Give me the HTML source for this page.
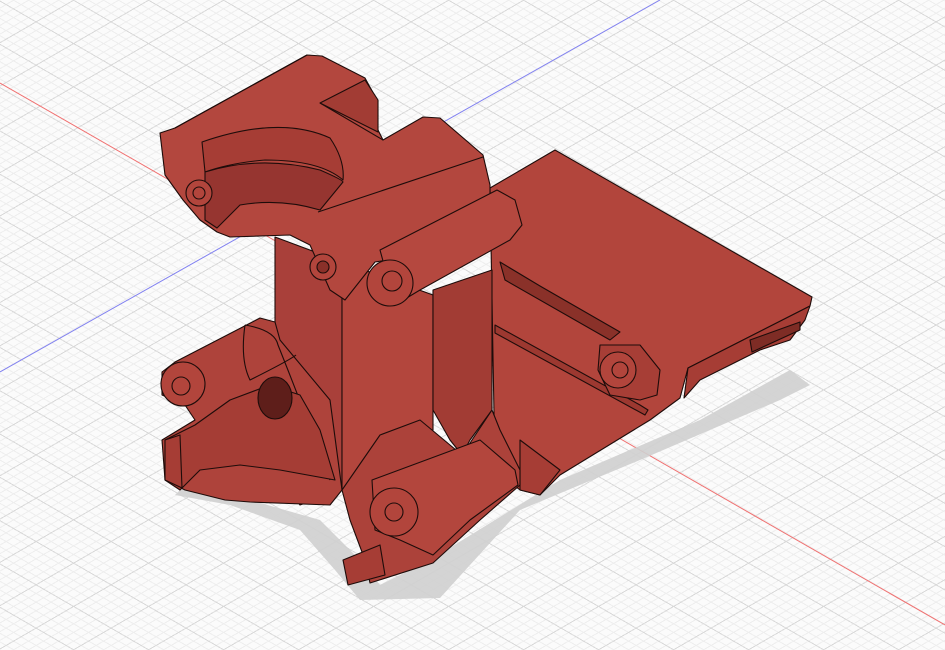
<!DOCTYPE html>
<html><head><style>
html,body{margin:0;padding:0;width:945px;height:650px;overflow:hidden;background:#fbfbfb}
.bg{position:absolute;left:0;top:0;width:945px;height:650px;
background:
repeating-linear-gradient(30deg, transparent 0 36.5px, #d9d9d9 36.5px 37.5px),
repeating-linear-gradient(150deg, transparent 0 36.5px, #d9d9d9 36.5px 37.5px),
repeating-linear-gradient(30deg, transparent 0 6.5px, #eeeeee 6.5px 7.5px),
repeating-linear-gradient(150deg, transparent 0 6.5px, #eeeeee 6.5px 7.5px),
#fbfbfb;}
svg{position:absolute;left:0;top:0}
</style></head><body>
<div class="bg"></div>
<svg width="945" height="650" viewBox="0 0 945 650">
<line x1="0" y1="83" x2="945" y2="625" stroke="#f07070" stroke-width="1"/>
<line x1="0" y1="372" x2="660" y2="0" stroke="#8080f0" stroke-width="1"/>
<polygon points="175,495 230,505 300,530 335,570 360,600 440,598 520,510 640,460 780,400 810,385 790,370 700,420 560,480 430,560 380,585 360,560 320,520 250,500 190,480" fill="#cfcfcf" opacity="0.9"/>
<g stroke="#1e0c0a" stroke-width="1.1" stroke-linejoin="round">
<polygon points="490,188 555,150 812,297 810,306 688,368 680,398 650,420 560,475 540,495 520,490 495,470" fill="#b2453c"/>
<polygon points="688,368 810,306 805,320 790,340 760,350 700,380 684,398" fill="#a63d35"/>
<polygon points="750,340 800,322 800,330 752,352" fill="#7e2c25"/>
<polygon points="500,262 540,286 620,332 610,340 505,280" fill="#8a3129"/>
<polygon points="495,325 640,405 648,410 645,415 495,333" fill="#9c3830"/>
<polygon points="600,345 640,345 660,370 657,395 640,400 610,395 598,370" fill="#a73e36"/>
<circle cx="618" cy="370" r="18" fill="#b2453c"/>
<circle cx="620" cy="370" r="8" fill="#b2453c"/>
<polygon points="520,440 560,470 540,495 520,490" fill="#a63d35"/>
<polygon points="275,237 342,262 342,490 300,505 275,470" fill="#a9403a"/>
<polygon points="342,262 433,295 433,430 400,440 342,490" fill="#b3463d"/>
<polygon points="433,290 492,270 492,410 470,440 462,455 450,440 433,410" fill="#a23c34"/>
<polygon points="162,372 175,362 260,318 275,322 280,340 330,400 342,490 330,505 250,502 225,500 185,490 165,480 162,440 195,420 185,405 162,395" fill="#ae433b"/>
<path d="M245,325 Q275,330 278,345 Q300,400 330,480" fill="none"/>
<path d="M245,325 Q240,360 250,380 Q290,360 296,355" fill="none"/>
<polygon points="165,440 195,425 230,400 270,385 300,395 320,430 335,480 280,470 240,465 200,470 180,490 165,480" fill="#a53d35"/>
<ellipse cx="275" cy="398" rx="17" ry="21" fill="#5e1e1a"/>
<polygon points="165,440 180,435 182,488 165,480" fill="#a63d35"/>
<circle cx="183" cy="384" r="22" fill="#b2453c"/>
<circle cx="181" cy="386" r="9" fill="#b2453c"/>
<polygon points="342,490 380,435 420,420 462,455 492,410 500,430 520,470 520,485 480,520 433,563 370,583 365,560 350,520" fill="#ac423a"/>
<polygon points="372,480 480,440 515,470 518,485 470,520 433,555 400,540 375,530" fill="#b3463d"/>
<circle cx="394" cy="512" r="24" fill="#b2453c"/>
<circle cx="394" cy="512" r="9" fill="#b2453c"/>
<polygon points="343,560 380,545 385,575 348,585" fill="#a63d35"/>
<polygon points="160,133 175,128 307,55 322,56 365,78 377,100 378,130 383,140 423,117 440,118 483,155 490,185 490,210 420,255 375,262 345,300 330,290 310,245 290,235 230,237 217,232 200,220 183,200 165,175" fill="#b3473e"/>
<polygon points="320,103 365,80 378,100 378,132" fill="#a23c34"/>
<line x1="320" y1="103" x2="383" y2="140"/>
<path d="M202,142 Q280,115 330,138 Q345,160 343,180 Q320,160 265,160 Q230,163 205,172 Z" fill="#a63d35"/>
<path d="M205,172 Q260,155 320,170 Q343,180 343,182 L320,210 Q280,198 240,205 L217,228 L205,220 Z" fill="#963530"/>
<line x1="318" y1="212" x2="483" y2="157"/>
<line x1="175" y1="128" x2="307" y2="55"/>
<circle cx="199" cy="193" r="13" fill="#b2453c"/>
<circle cx="199" cy="193" r="6" fill="#b2453c"/>
<circle cx="323" cy="267" r="13" fill="#b2453c"/>
<circle cx="323" cy="267" r="6" fill="#8a3029"/>
<polygon points="380,250 497,190 515,200 522,225 510,240 420,290 395,305" fill="#b5483f"/>
<circle cx="390" cy="283" r="23" fill="#b2453c"/>
<circle cx="392" cy="281" r="10" fill="#b2453c"/>
</g>
</svg>
</body></html>
